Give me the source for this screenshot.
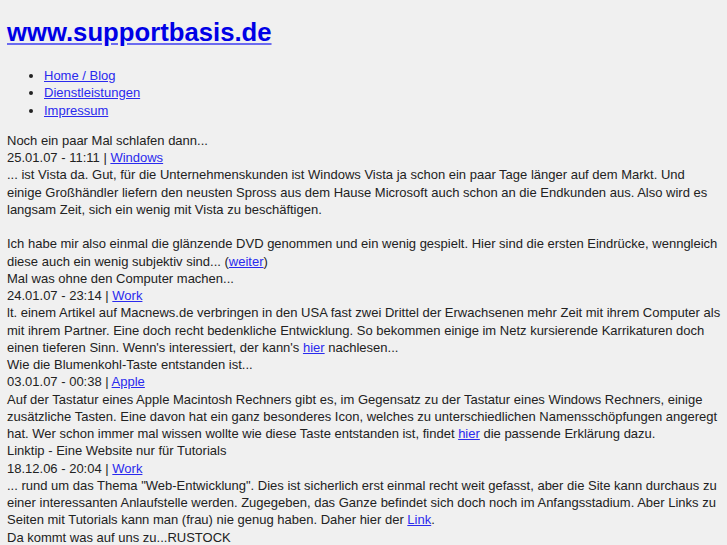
import React from "react";

const posts = [
  {
    title: "Noch ein paar Mal schlafen dann...",
    date: "25.01.07 - 11:11",
    cat: "Windows",
    body: (
      <>
        ... ist Vista da. Gut, für die Unternehmenskunden ist Windows Vista ja schon ein paar Tage länger auf dem Markt. Und einige Großhändler liefern den neusten Spross aus dem Hause Microsoft auch schon an die Endkunden aus. Also wird es langsam Zeit, sich ein wenig mit Vista zu beschäftigen.
        <br />
        <br />
        Ich habe mir also einmal die glänzende DVD genommen und ein wenig gespielt. Hier sind die ersten Eindrücke, wenngleich diese auch ein wenig subjektiv sind... (<Link>weiter</Link>)
      </>
    ),
  },
  {
    title: "Mal was ohne den Computer machen...",
    date: "24.01.07 - 23:14",
    cat: "Work",
    body: (
      <>
        lt. einem Artikel auf Macnews.de verbringen in den USA fast zwei Drittel der Erwachsenen mehr Zeit mit ihrem Computer als mit ihrem Partner. Eine doch recht bedenkliche Entwicklung. So bekommen einige im Netz kursierende Karrikaturen doch einen tieferen Sinn. Wenn's interessiert, der kann's <Link>hier</Link> nachlesen...
      </>
    ),
  },
  {
    title: "Wie die Blumenkohl-Taste entstanden ist...",
    date: "03.01.07 - 00:38",
    cat: "Apple",
    body: (
      <>
        Auf der Tastatur eines Apple Macintosh Rechners gibt es, im Gegensatz zu der Tastatur eines Windows Rechners, einige zusätzliche Tasten. Eine davon hat ein ganz besonderes Icon, welches zu unterschiedlichen Namensschöpfungen angeregt hat. Wer schon immer mal wissen wollte wie diese Taste entstanden ist, findet <Link>hier</Link> die passende Erklärung dazu.
      </>
    ),
  },
  {
    title: "Linktip - Eine Website nur für Tutorials",
    date: "18.12.06 - 20:04",
    cat: "Work",
    body: (
      <>
        ... rund um das Thema "Web-Entwicklung". Dies ist sicherlich erst einmal recht weit gefasst, aber die Site kann durchaus zu einer interessanten Anlaufstelle werden. Zugegeben, das Ganze befindet sich doch noch im Anfangsstadium. Aber Links zu Seiten mit Tutorials kann man (frau) nie genug haben. Daher hier der <Link>Link</Link>.
      </>
    ),
  },
  {
    title: "Da kommt was auf uns zu...RUSTOCK",
    date: "",
    cat: "",
    body: null,
  },
];

function Link({ children }) {
  return <a href="#" className="text-[#2a2aee] underline">{children}</a>;
}

export default function App() {
  return (
    <div className="min-h-screen bg-[#f0f0f0] pl-[7px] pr-[6.5px] text-[13px] leading-[17.25px] text-[#222] font-['Liberation_Sans',Arial,sans-serif]">
      <h1 className="pt-[17px] text-[25.7px] leading-[30px] font-bold">
        <a href="#" className="text-[#0000e6] underline decoration-[#6b6bf0]">www.supportbasis.de</a>
      </h1>
      <ul className="mt-[20px] mb-[13px] list-disc pl-[37px]">
        <li><Link>Home / Blog</Link></li>
        <li><Link>Dienstleistungen</Link></li>
        <li><Link>Impressum</Link></li>
      </ul>
      {posts.map((p) => (
        <div key={p.title}>
          <div>{p.title}</div>
          {p.date && (
            <div>
              {p.date} | <Link>{p.cat}</Link>
            </div>
          )}
          {p.body && <div>{p.body}</div>}
        </div>
      ))}
    </div>
  );
}
